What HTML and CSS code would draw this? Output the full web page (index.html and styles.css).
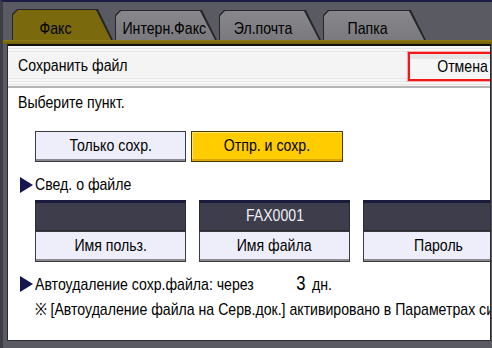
FILE: index.html
```html
<!DOCTYPE html>
<html lang="ru">
<head>
<meta charset="UTF-8">
<title>Сохранить файл</title>
<link rel="stylesheet" href="styles.css">
</head>
<body>
<div class="screen">
    <div class="tabs">
        <div class="tab active w1"><span class="t">Факс</span></div>
        <div class="tab w2"><span class="t">Интерн.Факс</span></div>
        <div class="tab w2"><span class="t">Эл.почта</span></div>
        <div class="tab w3"><span class="t">Папка</span></div>
    </div>
    <div class="tab-line"></div>
    <div class="panel">
        <div class="titlebar">
            <div class="title"><span class="t">Сохранить файл</span></div>
            <div class="cancel"><span class="t">Отмена</span></div>
        </div>
        <div class="prompt"><span class="t">Выберите пункт.</span></div>
        <div class="choices">
            <div class="btn"><span class="t">Только сохр.</span></div>
            <div class="btn selected"><span class="t">Отпр. и сохр.</span></div>
        </div>
        <div class="heading">
            <svg class="arrow" width="14" height="16" viewBox="0 0 14 16"><polygon points="0,0 13,8 0,16" fill="#161650"/></svg>
            <span class="t">Свед. о файле</span>
        </div>
        <div class="fields">
            <div class="field">
                <div class="value"></div>
                <div class="btn label"><span class="t">Имя польз.</span></div>
            </div>
            <div class="field">
                <div class="value"><span class="t">FAX0001</span></div>
                <div class="btn label"><span class="t">Имя файла</span></div>
            </div>
            <div class="field">
                <div class="value"></div>
                <div class="btn label"><span class="t">Пароль</span></div>
            </div>
        </div>
        <div class="heading auto">
            <svg class="arrow" width="14" height="16" viewBox="0 0 14 16"><polygon points="0,0 13,8 0,16" fill="#161650"/></svg>
            <span class="t">Автоудаление сохр.файла: через<span class="days">3</span>дн.</span>
        </div>
        <div class="note"><span class="t">※ [Автоудаление файла на Серв.док.] активировано в Параметрах системы.</span></div>
    </div>
</div>
</body>
</html>
```

FILE: styles.css
```css
body {
    margin: 0;
    font-family: "Liberation Sans", Arial, sans-serif;
    font-size: 17px;
    color: #000;
}
/* the panel font is a narrow one: squeeze Liberation Sans to its width */
.t {
    display: inline-block;
    white-space: nowrap;
    transform: scaleX(0.83);
    transform-origin: left center;
}
.cancel .t,
.btn .t,
.value .t {
    transform-origin: center;
}
.screen {
    width: 492px;
    height: 348px;
    box-sizing: border-box;
    background: #5a5a63;
    border-top: 2px solid #1c1c46;
    border-left: 3px solid #3e3e48;
    overflow: hidden;
}
.tabs {
    display: flex;
    gap: 2px;
    height: 31px;
    padding: 7px 0 0 9px;
}
.tab {
    position: relative;
    height: 30px;
    margin-top: 1px;
    flex-shrink: 0;
    padding-right: 14px;
    box-sizing: border-box;
    text-align: center;
    line-height: 20px;
}
.tab.active {
    height: 31px;
    margin-top: 0;
}
.w1 { width: 101px; }
.w2 { width: 102px; }
.w3 { width: 103px; }
.tab::before,
.tab::after {
    content: '';
    position: absolute;
    clip-path: polygon(0 100%, 0 5px, 5px 0, calc(100% - 15px) 0, 100% 100%);
}
.tab::before {
    inset: 0;
    background: #26262a;
}
.tab::after {
    inset: 1px 2px 0 1px;
    background: linear-gradient(#88888c, #7a7a7e);
}
.tab.active::after {
    background: #7b6a0d;
}
.tab .t {
    position: relative;
    z-index: 1;
    display: block;
    padding-top: 9px;
    transform-origin: center;
}
.tab.active .t {
    padding-top: 10px;
}
.tab-line {
    height: 4px;
    background: linear-gradient(#8c7b12, #6e5e08);
}
.panel {
    height: 297px;
    margin: 0 1px 0 4px;
    box-sizing: border-box;
    background: #fff;
    border: 1px solid #2c2c2c;
    border-top: 2px solid #111;
    overflow: hidden;
}
.titlebar {
    display: flex;
    align-items: center;
    height: 40px;
    border-bottom: 2px solid #b4b4b4;
    background: repeating-linear-gradient(#f6f6f6 0, #f6f6f6 2px, #e6e6e6 2px, #e6e6e6 3px);
}
.title {
    flex: 1;
    padding-left: 10px;
    line-height: 24px;
    background: #f4f4f4;
}
.cancel {
    width: 104px;
    height: 25px;
    margin-right: -26px;
    flex-shrink: 0;
    border: 2px solid #f01818;
    box-shadow: 0 0 0 1px #f4a8b0;
    background: linear-gradient(#e4e4e4 0, #e4e4e4 5px, #f6f6f6 5px);
    text-align: center;
    line-height: 25px;
}
.prompt {
    margin: 5px 0 0 10px;
    line-height: 20px;
}
.choices {
    display: flex;
    gap: 5px;
    margin: 18px 0 0 27px;
}
.btn {
    width: 151px;
    height: 31px;
    box-sizing: border-box;
    background: #eeeefb;
    border: 1px solid #3a3a40;
    box-shadow: inset 0 -2px 0 #8a8a90;
    text-align: center;
    line-height: 28px;
}
.btn.selected {
    width: 152px;
    background: #ffcc00;
    border-color: #4a3a08;
    box-shadow: inset 0 -2px 0 #d8a800, inset 1px 1px 0 #ffe470;
}
.heading {
    display: flex;
    align-items: center;
    margin: 13px 0 0 12px;
    line-height: 20px;
}
.arrow {
    flex-shrink: 0;
    margin-right: 1px;
}
.fields {
    display: grid;
    grid-template-columns: repeat(3, 151px);
    column-gap: 13px;
    margin: 5px 0 0 27px;
}
.value {
    height: 31px;
    box-sizing: border-box;
    background: #3d3d4c;
    border: 1px solid #2a2a34;
    border-top: 3px solid #1a1a3c;
    color: #eeeef4;
    text-align: center;
    line-height: 26px;
}
.field .label {
    width: auto;
}
.auto {
    margin-top: 11px;
}
.days {
    margin: 0 8px 0 51px;
    font-size: 20px;
}
.note {
    margin: 5px 0 0 27px;
    line-height: 20px;
    white-space: nowrap;
}
```
